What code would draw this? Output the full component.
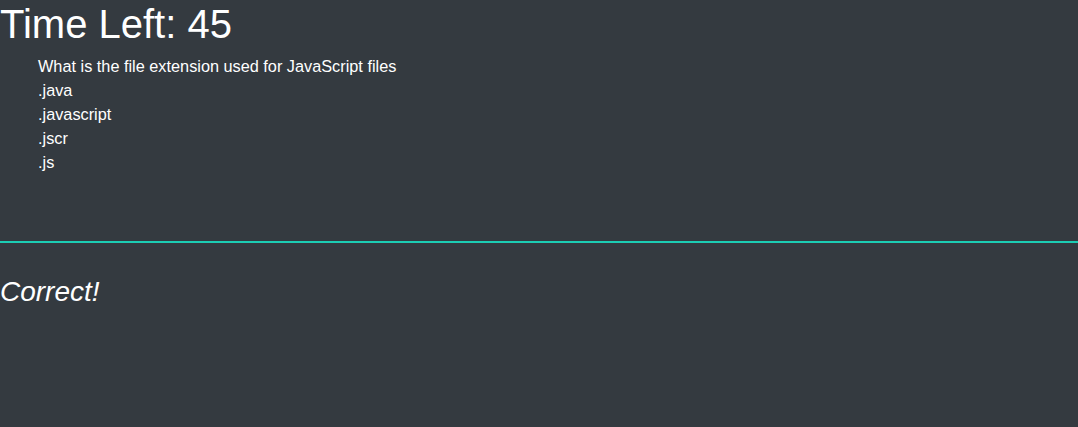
const answers = [".java", ".javascript", ".jscr", ".js"];

export default function App() {
  return (
    <div className="min-h-[427px] bg-[#343a40] text-white font-['Liberation_Sans',Arial,sans-serif]">
      <h1 className="mb-[6px] text-[40px] leading-[48px] font-medium">Time Left: 45</h1>

      <ul className="h-[187px] pl-[38px] text-[16.3px] leading-6">
        <li>What is the file extension used for JavaScript files</li>
        {answers.map((answer) => (
          <li key={answer}>{answer}</li>
        ))}
      </ul>

      <div className="h-[2px] bg-[#1ccdb4]" />

      <p className="mt-[32px] text-[28px] leading-[34px] italic">Correct!</p>
    </div>
  );
}
